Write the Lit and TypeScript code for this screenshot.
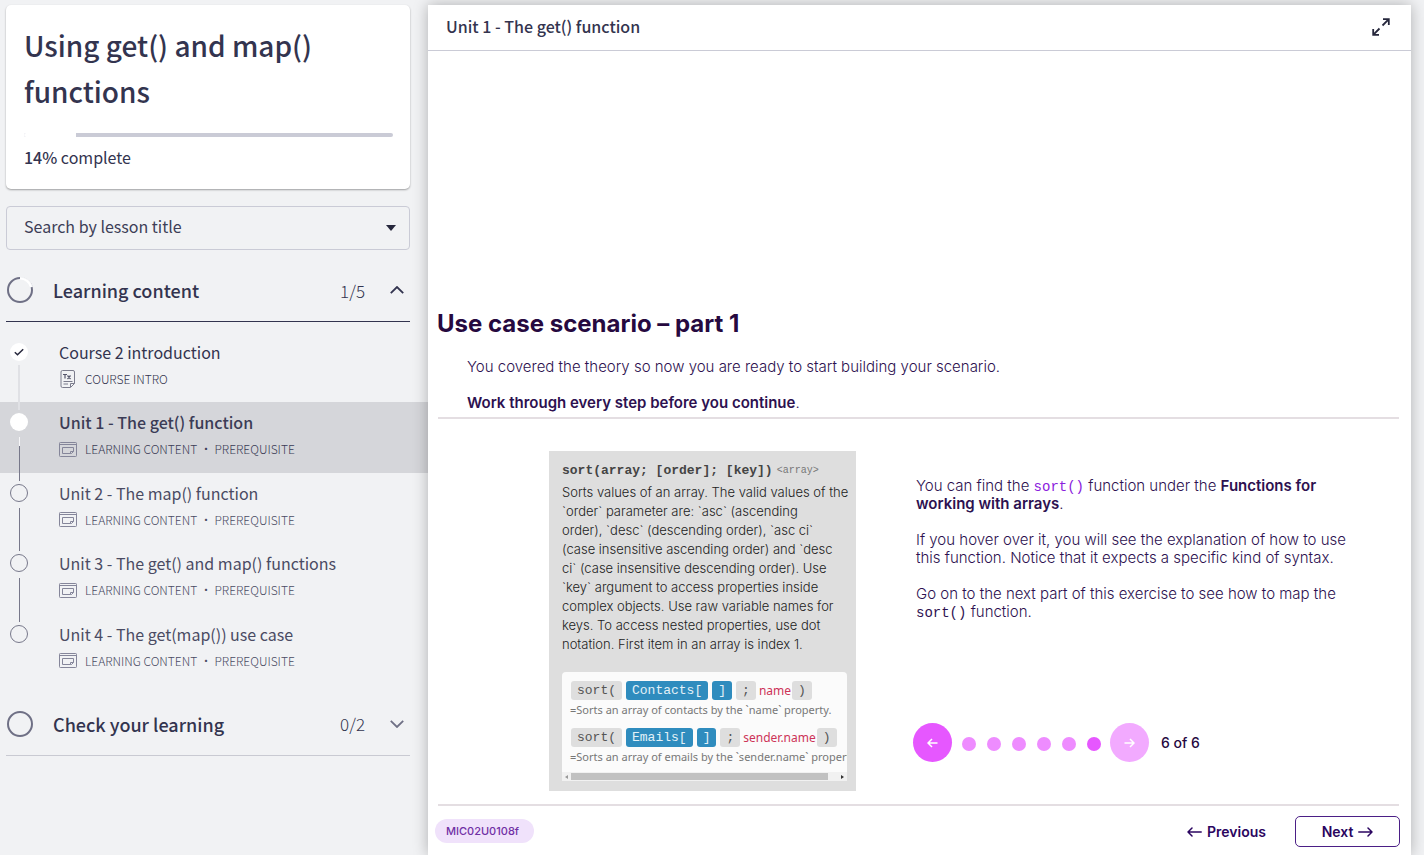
import { LitElement, html, svg, css, nothing } from "lit";
import { customElement, property, state } from "lit/decorators.js";
import { classMap } from "lit/directives/class-map.js";

type Status = "done" | "current" | "open";

interface Lesson {
  title: string;
  kind: "intro" | "content";
  meta: string;
  status: Status;
}

const LESSONS: Lesson[] = [
  { title: "Course 2 introduction", kind: "intro", meta: "COURSE INTRO", status: "done" },
  { title: "Unit 1 - The get() function", kind: "content", meta: "LEARNING CONTENT · PREREQUISITE", status: "current" },
  { title: "Unit 2 - The map() function", kind: "content", meta: "LEARNING CONTENT · PREREQUISITE", status: "open" },
  { title: "Unit 3 - The get() and map() functions", kind: "content", meta: "LEARNING CONTENT · PREREQUISITE", status: "open" },
  { title: "Unit 4 - The get(map()) use case", kind: "content", meta: "LEARNING CONTENT · PREREQUISITE", status: "open" },
];

const introIcon = svg`<svg class="kind" width="18" height="18" viewBox="0 0 18 18" fill="none" stroke="#7b7c8c" aria-hidden="true">
  <path d="M11.500 17.500H3.500A1.500 1.500 0 0 1 2 16V2A1.500 1.500 0 0 1 3.500.5h10.500A1.500 1.500 0 0 1 15.500 2v11.500l-4 4z"/>
  <path d="M11.500 17v-3.500h4M4.500 11.500h9M4.500 14h4.500"/>
  <path d="M4 4.500h4M6 4.500v4M8.500 5.500l3 3.500M11.500 5.500l-3 3.500" stroke-width="1.200" stroke="#55566b"/>
</svg>`;

const contentIcon = svg`<svg class="kind" width="18" height="15" viewBox="0 0 18 15" fill="none" stroke="#85869a" aria-hidden="true">
  <rect x=".5" y=".5" width="17" height="14" rx=".8"/>
  <path d="M.5 2.500h17"/>
  <path d="M11.500 11.500h-8v-6h11v4l-2 2z M11.500 11.500V9.500h3"/>
</svg>`;

@customElement("lesson-row")
class LessonRow extends LitElement {
  @property({ attribute: false }) lesson!: Lesson;
  @property({ type: Boolean }) last = false;

  static styles = css`
    :host { display: block; }
    .row {
      display: flex;
      height: 100%;
      box-sizing: border-box;
      padding-left: 10px;
      color: #4a4b63;
      text-decoration: none;
    }
    .row.done { color: #33344f; }
    .row.current { background: #d5d6da; color: #3b3c56; }
    .track {
      display: flex;
      flex-direction: column;
      align-items: center;
      width: 18px;
      padding-top: 11px;
      margin-bottom: -8px;
      position: relative;
    }
    .mark { display: block; flex: none; }
    .line { flex: 1; width: 1px; margin-top: 6px; background: #77788a; }
    .done .line { width: 2px; margin-top: 4px; background: #e0e1e5; }
    .current .line { background: linear-gradient(#f6f6f8 9px, #77788a 9px); }
    .text { display: block; padding: 8px 0 0 31px; }
    .title { display: block; font-size: 16px; line-height: 24px; }
    .current .title { font-weight: 500; }
    .meta {
      display: flex;
      align-items: center;
      gap: 8px;
      margin-top: 6px;
      font-size: 12px;
      font-weight: 300;
      line-height: 18px;
    }
    .kind { flex: none; }
  `;

  private mark(status: Status) {
    if (status === "open") {
      return svg`<svg class="mark" width="18" height="18" viewBox="0 0 18 18"><circle cx="9" cy="9" r="8.500" fill="none" stroke="#77788a"/></svg>`;
    }
    return svg`<svg class="mark" width="18" height="18" viewBox="0 0 18 18"><circle cx="9" cy="9" r="9" fill="#fff"/>${
      status === "done" ? svg`<path d="M4.800 9.300l2.700 2.500 5.700-5.600" fill="none" stroke="#26273c" stroke-width="1.500"/>` : nothing
    }</svg>`;
  }

  render() {
    const l = this.lesson;
    return html`
      <a class="row ${classMap({ [l.status]: true })}" href="#lesson">
        <span class="track">${this.mark(l.status)}${this.last ? nothing : html`<span class="line"></span>`}</span>
        <span class="text">
          <span class="title">${l.title}</span>
          <span class="meta">${l.kind === "intro" ? introIcon : contentIcon}<span>${l.meta}</span></span>
        </span>
      </a>`;
  }
}

@customElement("course-sidebar")
class CourseSidebar extends LitElement {
  @property({ type: Number }) progress = 14;
  @state() private open = true;

  static styles = css`
    :host { display: block; padding-top: 5px; font-family: "Noto Sans CJK SC", sans-serif; color: #33344f; }
    .card {
      margin: 0 18px 0 6px;
      padding: 17px 17px 20px 18px;
      background: #fff;
      border-radius: 5px;
      box-shadow: 0 1px 2px rgba(0, 0, 0, 0.35);
    }
    h1 { margin: 0; font-size: 28px; font-weight: 500; line-height: 46px; }
    .bar { height: 4px; margin-top: 19px; border-radius: 2px; background: #cacbd6; overflow: hidden; }
    .fill { height: 100%; background: #fff; }
    .percent { margin: 8px 0 0; font-size: 16px; line-height: 24px; }
    .percent b { font-weight: 500; }
    .search { display: grid; align-items: center; margin: 17px 18px 0 6px; }
    .search > * { grid-area: 1 / 1; }
    .hidden { width: 1px; height: 1px; overflow: hidden; opacity: 0; }
    select {
      appearance: none;
      height: 44px;
      padding: 0 18px 4px 17px;
      font: 400 16px "Noto Sans CJK SC", sans-serif;
      color: #3d3e57;
      background: transparent;
      border: 1px solid #cacbd6;
      border-radius: 4px;
    }
    .caret { justify-self: end; margin-right: 14px; pointer-events: none; }
    .section {
      display: flex;
      align-items: center;
      width: calc(100% - 24px);
      height: 64px;
      margin: 0 18px 0 6px;
      padding: 0 6px 0 1px;
      border: 0;
      border-bottom: 1px solid #c9cad2;
      background: none;
      color: inherit;
      font: 500 18px "Noto Sans CJK SC", sans-serif;
      text-align: left;
      cursor: pointer;
    }
    .section.open { height: 63px; margin-top: 9px; border-color: #33344f; }
    .name { flex: 1; margin-left: 20px; }
    .count { font-size: 17px; font-weight: 300; margin-right: 25px; }
    ul { display: grid; grid-auto-rows: 1fr; height: 352px; margin: 10px 0 8px; padding: 0; list-style: none; }
    li { display: grid; }
  `;

  render() {
    return html`
      <section class="card">
        <h1>Using get() and map() functions</h1>
        <div class="bar" role="progressbar" aria-label="Course progress" aria-valuenow=${this.progress}>
          <div class="fill" style="width:${this.progress}%"></div>
        </div>
        <p class="percent"><b>${this.progress}%</b> complete</p>
      </section>
      <div class="search">
        <label class="hidden" for="lesson">Search by lesson title</label>
        <select id="lesson"><option>Search by lesson title</option></select>
        <svg class="caret" width="10" height="6" viewBox="0 0 10 6" aria-hidden="true"><path d="M0 0h10L5 6z" fill="#26273c"/></svg>
      </div>
      <button class="section open" aria-expanded=${this.open} @click=${() => (this.open = !this.open)}>
        <svg width="26" height="26" viewBox="0 0 26 26" fill="none" stroke-width="2" aria-hidden="true">
          <circle cx="13" cy="13" r="12" stroke="#6f7085"/>
          <path d="M13 1a12 12 0 0 1 11.600 9" stroke="#f2f3f5" stroke-width="3"/>
          <path d="M13 1.500a11.500 11.500 0 0 1 11 8.500" stroke="#fff"/>
        </svg>
        <span class="name">Learning content</span>
        <span class="count">1/5</span>
        <svg width="14" height="8" viewBox="0 0 14 8" fill="none" stroke="#33344f" stroke-width="1.800" aria-hidden="true"><path d="M.8 7.200L7 1l6.200 6.200"/></svg>
      </button>
      ${this.open
        ? html`<ul>${LESSONS.map((l, i) => html`<li><lesson-row .lesson=${l} ?last=${i === LESSONS.length - 1}></lesson-row></li>`)}</ul>`
        : nothing}
      <button class="section" aria-expanded="false">
        <svg width="26" height="26" viewBox="0 0 26 26" fill="none" stroke-width="2" aria-hidden="true"><circle cx="13" cy="13" r="12" stroke="#6f7085"/></svg>
        <span class="name">Check your learning</span>
        <span class="count">0/2</span>
        <svg width="14" height="8" viewBox="0 0 14 8" fill="none" stroke="#6f7085" stroke-width="1.800" aria-hidden="true"><path d="M.8.8L7 7l6.200-6.200"/></svg>
      </button>`;
  }
}

@customElement("function-card")
class FunctionCard extends LitElement {
  static styles = css`
    :host { display: block; }
    .card { box-sizing: border-box; width: 307px; padding: 10px 0 10px 13px; background: #dedede; color: #333; font-family: Inter, sans-serif; }
    .signature { display: flex; align-items: center; gap: 4px; font: 700 13px/19px "Liberation Mono", monospace; color: #444; }
    .type { font-size: 10px; font-weight: 400; color: #777; }
    .about { margin: 3px 0 18px; font-size: 13px; font-weight: 300; line-height: 19px; color: #222; white-space: nowrap; }
    .examples { width: 285px; border-radius: 4px 4px 0 0; background: #fbfbfb; overflow: hidden; padding-top: 9px; }
    .code { display: flex; align-items: center; gap: 4px; margin-left: 9px; }
    .tok { padding: 0 6px; border-radius: 3px; background: #dedede; font: 13px/19px "Liberation Mono", monospace; color: #555; }
    .blue { background: #2f8cbe; color: #e3f1f8; }
    .arg { margin: 0 -3px 0 -1px; font: 12px/19px "Noto Sans", sans-serif; color: #cd3358; }
    .note { margin: 0 0 8px 8px; font: 11px/20px "Noto Sans", sans-serif; color: #777; white-space: nowrap; }
    .scroll { display: flex; align-items: center; justify-content: space-between; height: 9px; margin-top: -3px; padding: 0 3px; background: #f1f1f1; }
    .thumb { flex: 1; height: 7px; margin: 0 13px 0 3px; background: #c1c1c1; }
  `;

  private example(list: string, arg: string) {
    return html`
      <div class="code">
        <span class="tok">sort(</span><span class="tok blue">${list}[</span><span class="tok blue">]</span>
        <span class="tok">;</span><span class="arg">${arg}</span><span class="tok">)</span>
      </div>
      <div class="note">=Sorts an array of ${list.toLowerCase()} by the \`${arg}\` property.</div>`;
  }

  render() {
    return html`
      <div class="card">
        <div class="signature"><span>sort(array; [order]; [key])</span><span class="type">&lt;array&gt;</span></div>
        <p class="about">
          Sorts values of an array. The valid values of the<br />\`order\` parameter are: \`asc\` (ascending<br />order),
          \`desc\` (descending order), \`asc ci\`<br />(case insensitive ascending order) and \`desc<br />ci\` (case
          insensitive descending order). Use<br />\`key\` argument to access properties inside<br />complex objects. Use
          raw variable names for<br />keys. To access nested properties, use dot<br />notation. First item in an array
          is index 1.
        </p>
        <div class="examples">
          ${this.example("Contacts", "name")}
          ${this.example("Emails", "sender.name")}
          <div class="scroll">
            <svg width="3" height="4" viewBox="0 0 3 4" aria-hidden="true"><path d="M3 0v4L0 2z" fill="#999"/></svg>
            <span class="thumb"></span>
            <svg width="3" height="4" viewBox="0 0 3 4" aria-hidden="true"><path d="M0 0v4l3-2z" fill="#333"/></svg>
          </div>
        </div>
      </div>`;
  }
}

@customElement("lesson-view")
class LessonView extends LitElement {
  @state() private step = 6;

  static styles = css`
    :host {
      display: flex;
      flex-direction: column;
      background: #fff;
      box-shadow: 0 0 14px rgba(0, 0, 0, 0.28);
      font-family: Inter, sans-serif;
      color: #2d1150;
    }
    button { font-family: inherit; cursor: pointer; }
    header {
      display: flex;
      align-items: center;
      justify-content: space-between;
      height: 45px;
      padding: 0 19px 0 18px;
      border-bottom: 1px solid #cacbd6;
    }
    header h2 { margin: 0; padding-bottom: 4px; font: 500 16px/24px "Noto Sans CJK SC", sans-serif; color: #33344f; }
    .expand { display: grid; place-items: center; width: 22px; height: 22px; margin-bottom: 2px; padding: 0; border: 0; background: none; }
    .content { flex: 1; display: flex; flex-direction: column; justify-content: flex-end; padding: 0 11px 8px 7px; }
    h3 { margin: 0 0 19px 2px; font-size: 24px; font-weight: 700; line-height: 30px; color: #26093f; }
    p { margin: 0 0 18px; font-size: 15px; font-weight: 300; line-height: 18px; }
    b { font-weight: 600; }
    .intro { margin-left: 32px; }
    .intro.tight { margin-bottom: 5px; }
    hr { width: calc(100% - 4px); height: 2px; margin: 0 0 0 3px; border: 0; background: #e4dee2; }
    .columns { display: flex; gap: 57px; margin: 32px 0 13px; }
    .figure { flex: 1; display: flex; justify-content: flex-end; }
    .explain { display: flex; flex-direction: column; flex: 0 1 487px; }
    .words { padding: 26px 50px 0 3px; }
    code { font: 14px/1 "Liberation Mono", monospace; }
    .accent { color: #8a20dd; }
    .pager { display: flex; align-items: center; margin: auto 0 29px; }
    .round { display: grid; place-items: center; width: 39px; height: 39px; padding: 0; border: 0; border-radius: 50%; background: #e657ff; }
    .round:disabled { background: #f2aaff; }
    .dots { display: flex; gap: 11px; margin: 2px 9px 0 10px; }
    .dot { width: 14px; height: 14px; border-radius: 50%; background: #ee8cff; }
    .dot.on { background: #e657ff; }
    .steps { margin-left: 12px; font-size: 14px; font-weight: 500; line-height: 18px; color: #26093f; }
    footer { display: flex; align-items: center; margin-top: 10px; }
    .tag { margin: -2px auto 0 0; padding: 0 15px 0 11px; border-radius: 12px; background: #f0e2fb; color: #7030a5; font-size: 11px; font-weight: 500; line-height: 24px; }
    .nav { display: flex; align-items: center; justify-content: center; gap: 5px; padding: 0; border: 0; background: none; color: #2b0560; font-size: 14px; font-weight: 600; line-height: 18px; }
    .next { box-sizing: border-box; width: 105px; height: 31px; margin-left: 29px; border: 1px solid #4b1f86; border-radius: 5px; }
  `;

  render() {
    const total = 6;
    return html`
      <header>
        <h2>Unit 1 - The get() function</h2>
        <button class="expand" aria-label="Full screen">
          <svg width="18" height="18" viewBox="0 0 18 18" fill="none" stroke="#26273c" stroke-width="1.800" aria-hidden="true">
            <path d="M10.500 7.500L16.300 1.700M11 1.200h5.800V7M7.500 10.500l-5.800 5.800M7 16.800H1.200V11"/>
          </svg>
        </button>
      </header>
      <div class="content">
        <h3>Use case scenario – part 1</h3>
        <p class="intro">You covered the theory so now you are ready to start building your scenario.</p>
        <p class="intro tight"><b>Work through every step before you continue</b>.</p>
        <hr />
        <div class="columns">
          <div class="figure"><function-card></function-card></div>
          <div class="explain">
            <div class="words">
              <p>You can find the <code class="accent">sort()</code> function under the <b>Functions for working with arrays</b>.</p>
              <p>If you hover over it, you will see the explanation of how to use this function. Notice that it expects a specific kind of syntax.</p>
              <p>Go on to the next part of this exercise to see how to map the <code>sort()</code> function.</p>
            </div>
            <div class="pager">
              <button class="round" aria-label="Previous step" @click=${() => (this.step = Math.max(1, this.step - 1))}>
                <svg width="11" height="10" viewBox="0 0 11 10" fill="none" stroke="#fff" stroke-width="1.500" aria-hidden="true"><path d="M10.500 5H1M5 1L1 5l4 4"/></svg>
              </button>
              <div class="dots">
                ${Array.from({ length: total }, (_, i) => html`<span class="dot ${classMap({ on: i + 1 === this.step })}"></span>`)}
              </div>
              <button class="round" aria-label="Next step" ?disabled=${this.step === total} @click=${() => (this.step += 1)}>
                <svg width="11" height="10" viewBox="0 0 11 10" fill="none" stroke="#fff" stroke-width="1.500" aria-hidden="true"><path d="M.5 5H10M6 1l4 4-4 4"/></svg>
              </button>
              <span class="steps">${this.step} of ${total}</span>
            </div>
          </div>
        </div>
        <hr />
        <footer>
          <span class="tag">MIC02U0108f</span>
          <button class="nav">
            <svg width="15" height="10" viewBox="0 0 15 10" fill="none" stroke="#2b0560" stroke-width="1.500" stroke-linecap="round" stroke-linejoin="round" aria-hidden="true"><path d="M14.200 5H1M5 1L1 5l4 4"/></svg>
            Previous
          </button>
          <button class="nav next">
            Next
            <svg width="15" height="10" viewBox="0 0 15 10" fill="none" stroke="#2b0560" stroke-width="1.500" stroke-linecap="round" stroke-linejoin="round" aria-hidden="true"><path d="M.8 5H14M10 1l4 4-4 4"/></svg>
          </button>
        </footer>
      </div>`;
  }
}

@customElement("app-root")
class AppRoot extends LitElement {
  static styles = css`
    :host { display: flex; min-height: 100vh; background: #f1f2f4; overflow: hidden; }
    course-sidebar { flex: 0 0 428px; }
    lesson-view { flex: 1; min-width: 0; margin: 5px 13px 0 0; position: relative; z-index: 1; }
  `;

  render() {
    return html`<course-sidebar></course-sidebar><lesson-view></lesson-view>`;
  }
}
